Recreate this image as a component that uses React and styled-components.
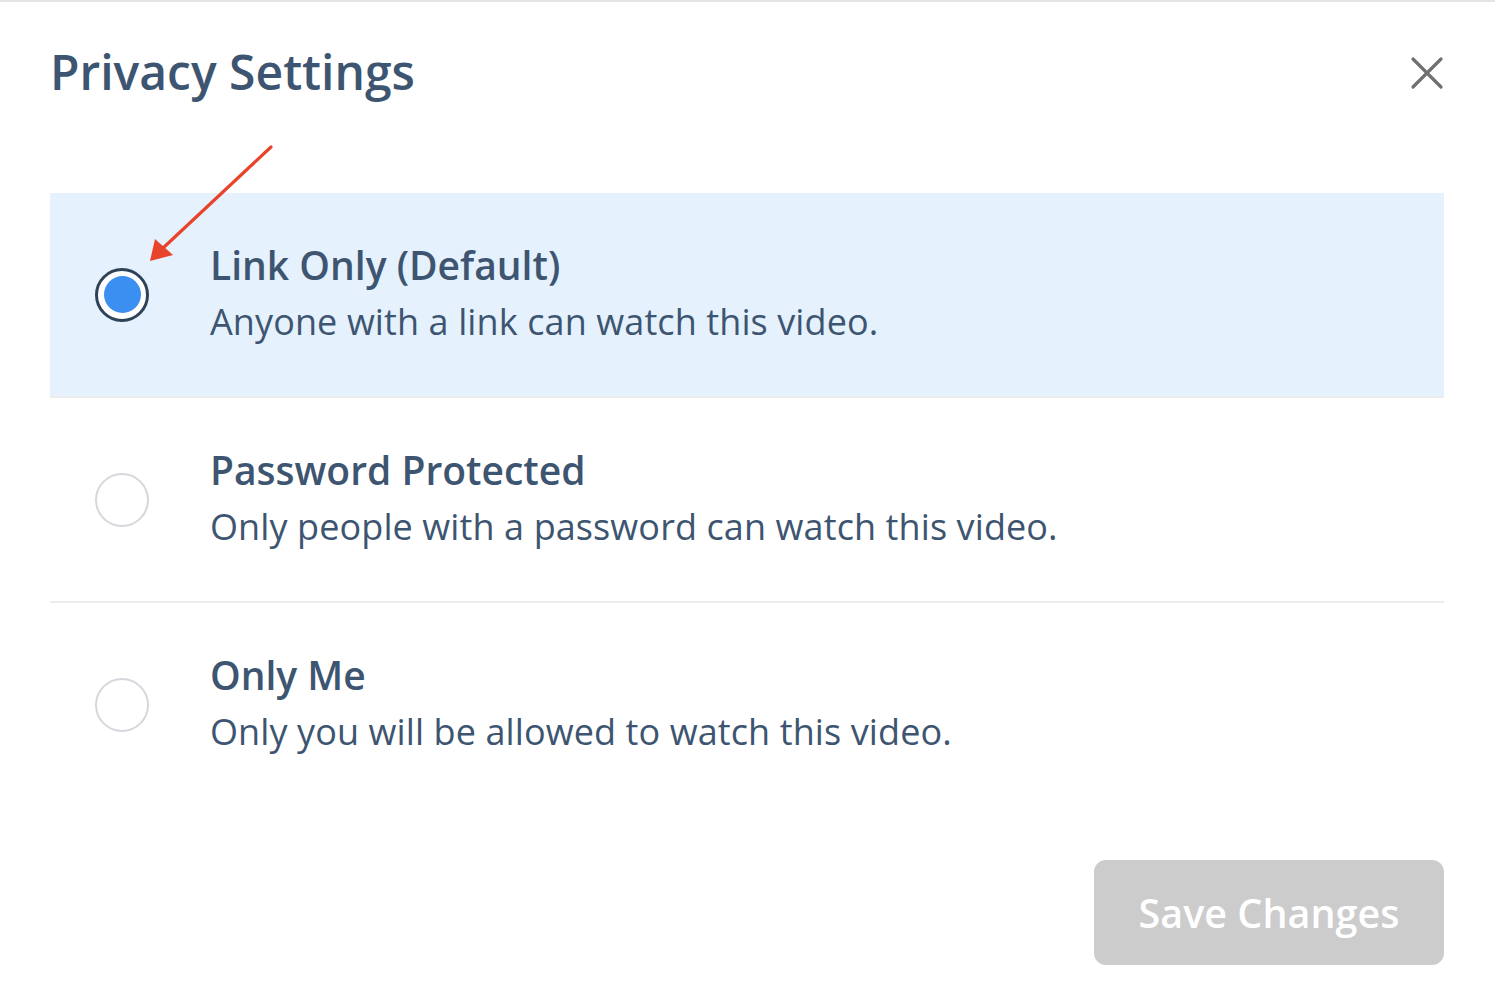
import React, { useState } from "react";
import styled, { createGlobalStyle } from "styled-components";

const Global = createGlobalStyle`
  html, body { margin: 0; padding: 0; background: #fff; }
  body { font-family: "Open Sans", "Noto Sans", sans-serif; }
`;

const Page = styled.div`
  position: relative;
  width: 1495px;
  height: 1007px;
  box-sizing: border-box;
  border-top: 2px solid #e4e4e4;
  padding: 0 51px 0 50px;
  display: flex;
  flex-direction: column;
`;

const Header = styled.div`
  display: flex;
  align-items: flex-start;
  justify-content: space-between;
  padding-top: 38px;
  height: 64px;
  margin-bottom: 89px;
`;

const Title = styled.h1`
  margin: 0;
  font-size: 48px;
  line-height: 64px;
  font-weight: 600;
  color: #3d5570;
`;

const CloseButton = styled.button`
  border: 0;
  background: transparent;
  padding: 0;
  margin-top: 16px;
  width: 34px;
  height: 34px;
  display: flex;
  align-items: center;
  justify-content: center;
  cursor: pointer;
`;

const Options = styled.div`
  display: flex;
  flex-direction: column;
`;

const Row = styled.label`
  display: flex;
  align-items: center;
  height: 205px;
  box-sizing: border-box;
  padding-left: 45px;
  background: ${(p) => (p.$active ? "#e5f1fd" : "#fff")};
  border-bottom: ${(p) => (p.$divider ? "2px solid #ececec" : "2px solid transparent")};
  cursor: pointer;
`;

const Radio = styled.span`
  flex: 0 0 auto;
  width: 54px;
  height: 54px;
  box-sizing: border-box;
  border-radius: 50%;
  background: #fff;
  border: ${(p) => (p.$checked ? "3px solid #2e4258" : "2px solid #d4d8dd")};
  display: flex;
  align-items: center;
  justify-content: center;
  margin-right: 61px;
  &::after {
    content: "";
    display: ${(p) => (p.$checked ? "block" : "none")};
    width: 37px;
    height: 37px;
    border-radius: 50%;
    background: #3b8ff0;
  }
`;

const TextBlock = styled.div`
  display: flex;
  flex-direction: column;
`;

const OptionTitle = styled.div`
  font-size: 39px;
  line-height: 54px;
  font-weight: 600;
  color: #3d5570;
`;

const OptionDesc = styled.div`
  font-size: 36px;
  line-height: 60px;
  font-weight: 400;
  letter-spacing: 0.1px;
  color: #3d5570;
`;

const Footer = styled.div`
  display: flex;
  justify-content: flex-end;
  margin-top: 52px;
`;

const SaveButton = styled.button`
  width: 350px;
  height: 105px;
  border: 0;
  border-radius: 12px;
  background: #cccccc;
  color: #fff;
  font-family: "Open Sans", "Noto Sans", sans-serif;
  font-size: 39.5px;
  font-weight: 600;
  cursor: default;
`;

const Annotation = styled.svg`
  position: absolute;
  left: 0;
  top: 0;
  pointer-events: none;
`;

const options = [
  { id: "link", title: "Link Only (Default)", desc: "Anyone with a link can watch this video." },
  { id: "password", title: "Password Protected", desc: "Only people with a password can watch this video." },
  { id: "me", title: "Only Me", desc: "Only you will be allowed to watch this video." },
];

export default function App() {
  const [selected, setSelected] = useState("link");
  return (
    <>
      <Global />
      <Page>
        <Header>
          <Title>Privacy Settings</Title>
          <CloseButton aria-label="Close">
            <svg width="34" height="34" viewBox="0 0 34 34">
              <path d="M3 3 L31 31 M31 3 L3 31" stroke="#707070" strokeWidth="3.2" strokeLinecap="round" />
            </svg>
          </CloseButton>
        </Header>
        <Options>
          {options.map((o, i) => (
            <Row
              key={o.id}
              $active={selected === o.id}
              $divider={i < options.length - 1}
              onClick={() => setSelected(o.id)}
            >
              <Radio $checked={selected === o.id} />
              <TextBlock>
                <OptionTitle>{o.title}</OptionTitle>
                <OptionDesc>{o.desc}</OptionDesc>
              </TextBlock>
            </Row>
          ))}
        </Options>
        <Footer>
          <SaveButton>Save Changes</SaveButton>
        </Footer>
        <Annotation width="300" height="300" viewBox="0 0 300 300">
          <line x1="271" y1="145" x2="162" y2="247" stroke="#e8432b" strokeWidth="3.2" strokeLinecap="round" />
          <polygon points="150,259 155,237 173,253" fill="#e8432b" />
        </Annotation>
      </Page>
    </>
  );
}
